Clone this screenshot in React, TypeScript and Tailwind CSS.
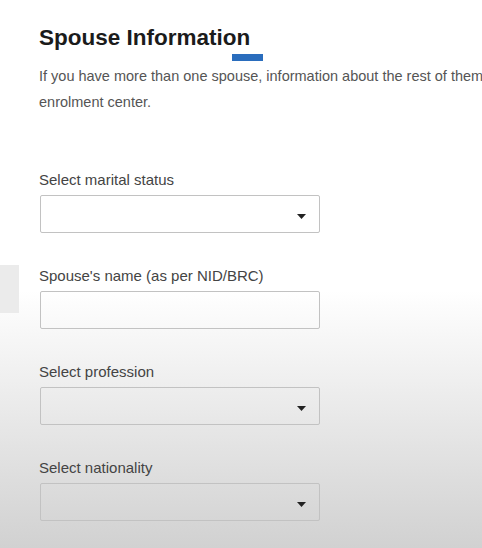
const FIELDS = [
  { label: "Select marital status", select: true },
  { label: "Spouse's name (as per NID/BRC)", select: false },
  { label: "Select profession", select: true },
  { label: "Select nationality", select: true },
];

function Caret() {
  return (
    <svg width="9" height="5" viewBox="0 0 9 5" className="absolute right-[13px] top-[18px]">
      <path d="M0 0h9L4.5 5z" fill="#222" />
    </svg>
  );
}

export default function App() {
  return (
    <div className="relative min-h-screen w-full overflow-hidden bg-[linear-gradient(to_bottom,#ffffff_0%,#ffffff_53%,#d1d1d1_100%)] font-['Liberation_Sans',Arial,sans-serif]">
      <div className="absolute left-0 top-[265px] h-[48px] w-[19px] bg-[#ebebeb]" />
      <div className="absolute left-[232px] top-[54px] h-[7px] w-[31px] bg-[#2a6dbd]" />

      <div className="pl-[39px] pt-[25px]">
        <h1 className="text-[22.5px] font-bold leading-[26px] text-[#1b1b1b]">Spouse Information</h1>
        <p className="mt-[12px] whitespace-nowrap text-[14.5px] leading-[26px] text-[#555]">
          If you have more than one spouse, information about the rest of them can be provided at the
          <br />
          enrolment center.
        </p>

        <div className="mt-[56px] flex flex-col gap-[34px]">
          {FIELDS.map(({ label, select }) => (
            <div key={label} className="flex flex-col gap-[6px]">
              <span className="text-[15px] leading-[18px] text-[#444]">{label}</span>
              <div className="relative ml-px h-[38px] w-[280px] rounded-[2px] border border-[#c2c2c2]">
                {select && <Caret />}
              </div>
            </div>
          ))}
        </div>
      </div>
    </div>
  );
}
